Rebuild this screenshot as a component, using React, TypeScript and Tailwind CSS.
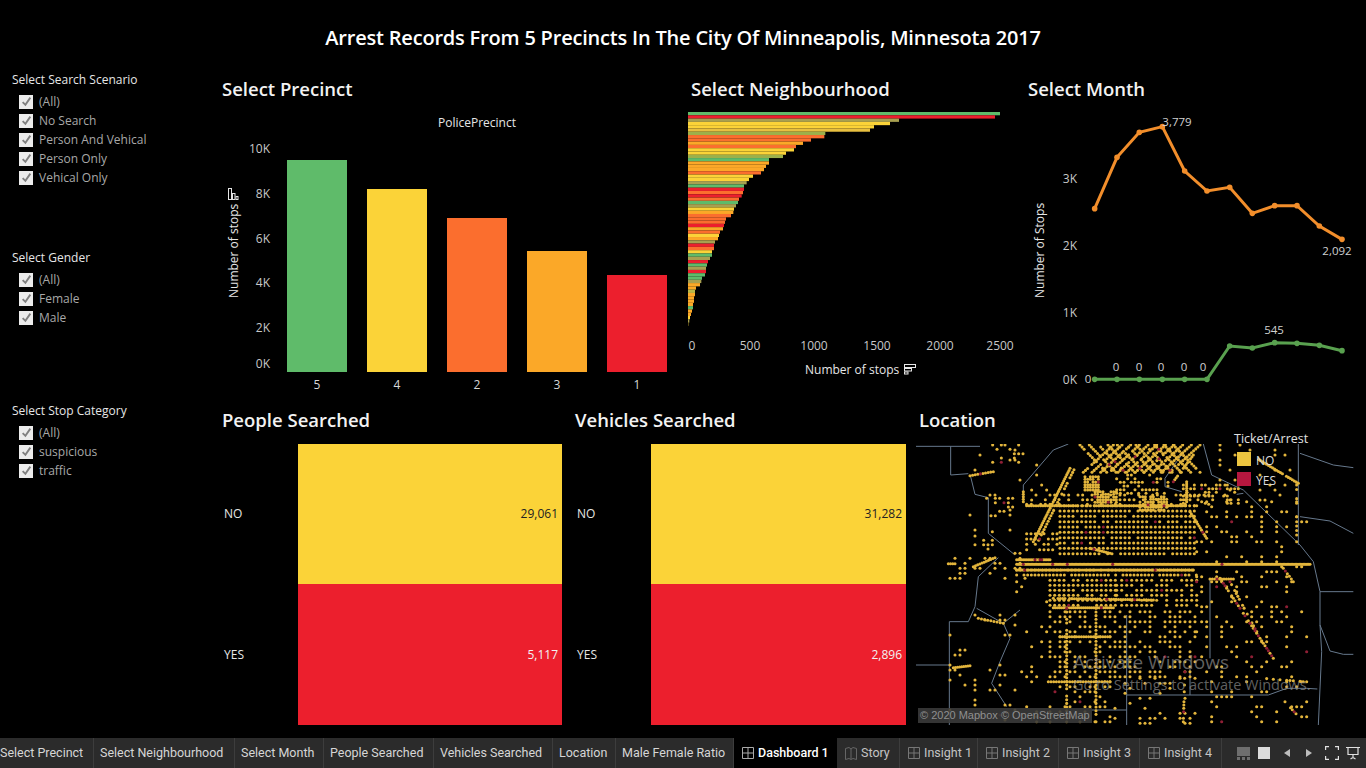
import { FC } from 'react'

const GREEN = '#5fbb6a'
const YELLOW = '#fbd338'
const ORANGE = '#fb6e2e'
const AMBER = '#fba828'
const RED = '#ec1f2d'

const filters = [
  { title: 'Select Search Scenario', items: ['(All)', 'No Search', 'Person And Vehical', 'Person Only', 'Vehical Only'], h: 'h-[178px]' },
  { title: 'Select Gender', items: ['(All)', 'Female', 'Male'], h: 'h-[153px]' },
  { title: 'Select Stop Category', items: ['(All)', 'suspicious', 'traffic'], h: 'h-[150px]' }
]

const precinctBars = [
  { label: '5', x: 287, top: 160, color: GREEN },
  { label: '4', x: 367, top: 189, color: YELLOW },
  { label: '2', x: 447, top: 218, color: ORANGE },
  { label: '3', x: 527, top: 251, color: AMBER },
  { label: '1', x: 607, top: 275, color: RED }
]

const precinctTicks = [
  ['10K', 149],
  ['8K', 194],
  ['6K', 239],
  ['4K', 283],
  ['2K', 328],
  ['0K', 364]
] as const

// right edges of the neighbourhood bars, read off the chart
const hoodBars: [number, string][] = [
  [960, GREEN], [945, RED], [657, '#a8a050'], [630, YELLOW], [582, YELLOW], [570, '#e8c040'], [436, '#9db04a'], [433, ORANGE],
  [393, ORANGE], [369, AMBER], [348, ORANGE], [342, YELLOW], [318, YELLOW], [309, '#9db04a'], [267, GREEN], [267, AMBER],
  [258, AMBER], [252, AMBER], [243, ORANGE], [219, YELLOW], [207, YELLOW], [200, '#a8a050'], [192, GREEN], [192, RED],
  [189, ORANGE], [185, RED], [177, ORANGE], [174, GREEN], [168, '#a8a050'], [162, YELLOW], [160, AMBER], [153, ORANGE],
  [138, ORANGE], [135, ORANGE], [132, RED], [129, AMBER], [120, ORANGE], [117, YELLOW], [114, AMBER], [105, '#a8a050'],
  [102, RED], [102, ORANGE], [96, YELLOW], [96, GREEN], [90, '#a8a050'], [84, RED], [81, GREEN], [78, '#a8a050'], [78, RED],
  [75, GREEN], [66, GREEN], [64, '#a8a050'], [60, AMBER], [48, AMBER], [45, '#b8b848'], [45, AMBER], [42, AMBER], [42, AMBER],
  [39, AMBER], [39, GREEN], [36, AMBER], [33, AMBER], [30, YELLOW], [28, '#a8a050'], [25, YELLOW]
]

const hoodTicks = [
  ['0', 692],
  ['500', 750],
  ['1000', 814],
  ['1500', 877],
  ['2000', 940],
  ['2500', 1000]
] as const

const monthX = [224, 291, 358, 427, 494, 561, 629, 697, 764, 831, 898, 966]
const orangeY = [326, 172, 97, 80, 213, 273, 262, 340, 317, 317, 378, 418]
const greenY = [838, 838, 838, 838, 838, 838, 738, 744, 728, 730, 736, 752]
const toPoints = (ys: number[]) => monthX.map((x, i) => ({ x: 1020 + x / 3, y: 100 + ys[i] / 3 }))

const monthLabels = [
  ['3,779', 1177, 126],
  ['2,092', 1337, 255],
  ['545', 1274, 334],
  ['0', 1088, 383],
  ['0', 1116, 371],
  ['0', 1139, 371],
  ['0', 1161, 371],
  ['0', 1184, 371],
  ['0', 1203, 371]
] as const

const monthTicks = [
  ['3K', 183],
  ['2K', 250],
  ['1K', 317],
  ['0K', 384]
] as const

const boundaries = [
  'M18 34H210M122 34V120L175 116M182 125L195 178L235 188V295L315 360',
  'M265 368L205 425L195 515L175 560H118V690H18M118 690V870M200 520L280 565L330 525M280 565L300 610L270 680L245 745L290 815',
  'M340 150L430 45L475 27M340 150V200',
  'M830 40L800 80L765 130V155L815 170M880 27L905 120L1000 165L1170 330L1210 380L1230 470V570L1235 650L1225 870',
  'M1165 27V330M1170 55L1270 90L1330 98M1170 245L1260 258L1330 295M1230 470H1330M1230 570L1260 648L1300 658H1330M1000 175L980 178',
  'M650 540V870M900 430V670M650 780H1075L1130 760H1190L1222 762M840 700V780M545 825H650'
]

// map points are generated from zones, with a fixed seed so that every render is the same
const buildDots = () => {
  let seed = 20170
  const rnd = () => {
    seed = (seed + 0x6d2b79f5) | 0
    let t = Math.imul(seed ^ (seed >>> 15), 1 | seed)
    t = (t + Math.imul(t ^ (t >>> 7), 61 | t)) ^ t
    return ((t ^ (t >>> 14)) >>> 0) / 4294967296
  }
  const dots: { x: number; y: number; red: boolean }[] = []
  const add = (x: number, y: number, redRate = 0.02) => {
    if (y < 30 || y > 866 || x < 112 || x > 1205) return
    dots.push({ x, y, red: rnd() < redRate })
  }
  const zone = (x0: number, x1: number, y0: number, y1: number, p: number, gx = 16, gy = 16) => {
    for (let y = y0; y <= y1; y += gy) for (let x = x0; x <= x1; x += gx) if (rnd() < p) add(x, y)
  }
  const line = (x0: number, y0: number, x1: number, y1: number, step: number, p = 1, redRate = 0.02) => {
    const n = Math.max(1, Math.round(Math.hypot(x1 - x0, y1 - y0) / step))
    for (let i = 0; i <= n; i++) if (rnd() < p) add(x0 + ((x1 - x0) * i) / n, y0 + ((y1 - y0) * i) / n, redRate)
  }
  // city core
  zone(450, 860, 212, 356, 0.92, 13, 16)
  zone(350, 450, 296, 356, 0.8, 13, 16)
  zone(320, 860, 405, 422, 0.92, 11, 15)
  zone(420, 620, 436, 524, 0.9, 14, 15)
  zone(620, 860, 436, 524, 0.68, 15, 15)
  zone(420, 860, 530, 730, 0.5, 15, 15)
  zone(420, 600, 740, 860, 0.36, 15, 15)
  zone(350, 900, 180, 212, 0.5, 14, 14)
  // main streets
  line(320, 388, 1200, 388, 4)
  line(320, 374, 420, 374, 5)
  line(320, 405, 850, 405, 6)
  line(350, 212, 860, 212, 7, 0.9)
  line(430, 490, 730, 495, 7, 0.9)
  line(430, 518, 610, 518, 6)
  line(450, 605, 600, 605, 7)
  line(415, 740, 600, 740, 8)
  line(470, 520, 470, 860, 11, 0.9)
  line(558, 520, 558, 860, 11, 0.9)
  line(480, 100, 370, 320, 7)
  line(492, 104, 382, 324, 9, 0.8)
  line(900, 432, 970, 432, 7)
  line(540, 340, 600, 355, 6)
  // north diagonal grid
  for (let i = 0; i < 11; i++) {
    line(510 + i * 28, 30, 590 + i * 28, 112, 9, 0.9)
    line(520 + i * 26, 112, 610 + i * 26, 30, 9, 0.9)
  }
  zone(525, 565, 125, 170, 0.95, 8, 8)
  zone(555, 625, 170, 205, 0.85, 8, 8)
  zone(690, 770, 185, 230, 0.8, 8, 8)
  zone(620, 780, 120, 185, 0.35, 11, 11)
  zone(820, 990, 150, 215, 0.5, 11, 11)
  line(790, 140, 850, 60, 7, 0.8)
  line(830, 140, 830, 200, 7)
  line(840, 230, 890, 310, 7)
  // south east diagonals
  line(930, 430, 1090, 670, 9, 0.75, 0.22)
  line(960, 440, 1040, 590, 10, 0.7, 0.15)
  line(1125, 800, 1180, 860, 8, 0.8, 0.2)
  line(1120, 400, 1150, 440, 10, 0.8, 0.3)
  line(1060, 730, 1180, 740, 10, 0.6)
  line(825, 700, 820, 860, 10, 0.5, 0.3)
  // north east
  line(1040, 70, 1165, 145, 7, 0.9)
  line(1160, 150, 1160, 300, 14, 0.7)
  zone(930, 1140, 30, 200, 0.16, 15, 15)
  // outer scatter
  zone(860, 1200, 200, 870, 0.2, 15, 15)
  zone(600, 860, 730, 870, 0.24, 15, 15)
  zone(120, 350, 340, 430, 0.34, 15, 15)
  zone(120, 340, 30, 300, 0.07, 15, 15)
  zone(235, 340, 30, 90, 0.28, 13, 13)
  zone(230, 310, 190, 250, 0.4, 13, 13)
  zone(195, 260, 290, 350, 0.35, 13, 13)
  zone(120, 320, 540, 860, 0.16, 15, 15)
  zone(320, 420, 440, 860, 0.09, 15, 15)
  zone(350, 450, 60, 200, 0.1, 15, 15)
  line(180, 122, 250, 110, 8)
  line(130, 698, 180, 692, 6)
  line(115, 386, 135, 386, 6)
  line(190, 395, 255, 368, 7)
  line(205, 550, 280, 565, 9, 0.8)
  line(340, 170, 340, 200, 8)
  return dots
}

const mapDots = buildDots()

const tabs = [
  { label: 'Select Precinct', w: 'w-[94px]' },
  { label: 'Select Neighbourhood', w: 'w-[141px]' },
  { label: 'Select Month', w: 'w-[89px]' },
  { label: 'People Searched', w: 'w-[110px]' },
  { label: 'Vehicles Searched', w: 'w-[119px]' },
  { label: 'Location', w: 'w-[63px]' },
  { label: 'Male Female Ratio', w: 'w-[118px]' }
]

const sheetTabs = [
  { label: 'Insight 1', w: 'w-[78px]' },
  { label: 'Insight 2', w: 'w-[81px]' },
  { label: 'Insight 3', w: 'w-[81px]' },
  { label: 'Insight 4', w: 'w-[82px]' }
]

const GridIcon: FC<{ color?: string }> = ({ color = '#777' }) => (
  <svg width="12" height="12" viewBox="0 0 12 12" fill="none" stroke={color} className="shrink-0">
    <path d="M.5.5h11v11H.5zM6 .5v11M.5 6h11" />
  </svg>
)

const Heading: FC<{ children: string; className?: string }> = ({ children, className = '' }) => (
  <h2 className={`text-[18.5px] font-semibold leading-none text-[#f2f2f2] ${className}`}>{children}</h2>
)

const FilterList: FC<{ title: string; items: string[]; h: string }> = ({ title, items, h }) => (
  <section className={`${h} pl-3`}>
    <h3 className="flex h-[19px] items-center text-[12px] font-medium text-[#e6e6e6]">{title}</h3>
    <ul className="mt-[3px] pl-[7px]">
      {items.map(item => (
        <li key={item} className="flex h-[19px] items-center gap-[6px] text-[12px] text-[#a8a8a8]">
          <span className="flex size-[14px] items-center justify-center bg-[#ececec]">
            <svg width="11" height="11" viewBox="0 0 10 10" fill="none" stroke="#808080" strokeWidth="1.7">
              <path d="M1.5 5.5 4 8l4.5-6.5" />
            </svg>
          </span>
          {item}
        </li>
      ))}
    </ul>
  </section>
)

const PrecinctChart = () => (
  <svg width="458" height="302" viewBox="222 102 458 302" className="block">
    <text x="477" y="127" textAnchor="middle" fontSize="12" fill="#e6e6e6">PolicePrecinct</text>
    {precinctTicks.map(([label, y]) => (
      <text key={label} x="270" y={y + 4} textAnchor="end" fontSize="12" fill="#c8c8c8">{label}</text>
    ))}
    {precinctBars.map(bar => (
      <g key={bar.label}>
        <rect x={bar.x} y={bar.top} width="60" height={372 - bar.top} fill={bar.color} />
        <text x={bar.x + 30} y="389" textAnchor="middle" fontSize="12" fill="#d8d8d8">{bar.label}</text>
      </g>
    ))}
    <text transform="translate(238 298) rotate(-90)" fontSize="12" fill="#e6e6e6">Number of stops</text>
    <g fill="none" stroke="#e6e6e6" strokeWidth="1">
      <rect x="228.5" y="188.5" width="3" height="11" />
      <rect x="232.5" y="193.5" width="2.5" height="6" />
      <rect x="236" y="196.5" width="2" height="3" />
    </g>
  </svg>
)

const NeighbourhoodChart = () => (
  <svg width="340" height="302" viewBox="680 102 340 302" className="block">
    {hoodBars.map(([edge, color], i) => (
      <rect key={i} x="688" y={112 + i * 3.29} width={(edge - 24) / 3} height="3.29" fill={color} />
    ))}
    {hoodTicks.map(([label, x]) => (
      <text key={label} x={x} y="350" textAnchor="middle" fontSize="12" fill="#c8c8c8">{label}</text>
    ))}
    <text x="805" y="374" fontSize="12" fill="#e6e6e6">Number of stops</text>
    <g fill="none" stroke="#e6e6e6" strokeWidth="1">
      <rect x="904.5" y="364.5" width="11" height="3" />
      <rect x="904.5" y="368.5" width="7" height="2.5" />
      <rect x="904.5" y="372" width="3.5" height="2" />
    </g>
  </svg>
)

const MonthChart = () => (
  <svg width="346" height="302" viewBox="1020 102 346 302" className="block">
    {monthTicks.map(([label, y]) => (
      <text key={label} x="1077" y={y} textAnchor="end" fontSize="12" fill="#c8c8c8">{label}</text>
    ))}
    <text transform="translate(1044 298) rotate(-90)" fontSize="12" fill="#e6e6e6">Number of Stops</text>
    {[
      { color: '#f28e2b', ys: orangeY },
      { color: '#59a14f', ys: greenY }
    ].map(({ color, ys }) => {
      const points = toPoints(ys)
      return (
        <g key={color}>
          <polyline points={points.map(p => `${p.x},${p.y}`).join(' ')} fill="none" stroke={color} strokeWidth="3" />
          {points.map((p, i) => (
            <circle key={i} cx={p.x} cy={p.y} r="2.8" fill={color} />
          ))}
        </g>
      )
    })}
    {monthLabels.map(([label, x, y], i) => (
      <text key={i} x={x} y={y} textAnchor="middle" fontSize="11.5" fill="#d0d0d0">{label}</text>
    ))}
  </svg>
)

const MatrixPanel: FC<{ title: string; no: string; yes: string; panelW: string; rectW: string }> = ({ title, no, yes, panelW, rectW }) => (
  <div className={`flex ${panelW} flex-col`}>
    <Heading className="flex h-[40px] items-center pb-[7px]">{title}</Heading>
    <div className="flex h-[281px]">
      <div className="flex w-[76px] flex-col pl-[2px] text-[12px] text-[#e6e6e6]">
        <div className="flex h-[140px] items-center">NO</div>
        <div className="flex h-[141px] items-center">YES</div>
      </div>
      <div className={`flex ${rectW} flex-col text-right text-[12px]`}>
        <div className="flex h-[140px] items-center justify-end bg-[#fbd338] pr-1 text-[#222]">{no}</div>
        <div className="flex h-[141px] items-center justify-end bg-[#ec1f2d] pr-1 text-[#f2f2f2]">{yes}</div>
      </div>
    </div>
  </div>
)

const LocationPanel = () => (
  <div className="relative flex w-[450px] flex-col">
    <Heading className="flex h-[40px] items-center pb-[7px] pl-[3px]">Location</Heading>
    <div className="relative h-[281px] overflow-hidden">
      <svg width="450" height="281" viewBox="18 27 1350 843" className="block">
        {boundaries.map((d, i) => (
          <path key={i} d={d} fill="none" stroke="#66788c" strokeWidth="3" />
        ))}
        {mapDots.filter(dot => !dot.red).map((dot, i) => (
          <circle key={i} cx={dot.x} cy={dot.y} r="4.6" fill="#e3b53c" />
        ))}
        {mapDots.filter(dot => dot.red).map((dot, i) => (
          <circle key={i} cx={dot.x} cy={dot.y} r="4.6" fill="#8f1f35" />
        ))}
      </svg>
      <div className="absolute bottom-[2px] left-[2px] flex h-[15px] w-[174px] items-center whitespace-nowrap bg-[#3a3a3a]/90 pl-[2px] font-['Liberation_Sans',sans-serif] text-[11px] leading-none text-[#8f8f8f]">
        © 2020 Mapbox © OpenStreetMap
      </div>
      <div className="absolute left-[157px] top-[206px] text-[19px] leading-6 text-[#8c8c8c]/70">Activate Windows</div>
      <div className="absolute left-[157px] top-[232px] whitespace-nowrap text-[14.5px] leading-[18px] text-[#8c8c8c]/70">Go to Settings to activate Windows.</div>
    </div>
    <div className="absolute left-[318px] top-[27px] text-[12.5px] leading-4 text-[#e0e0e0]">Ticket/Arrest</div>
    <div className="absolute left-[321px] top-[48px] flex flex-col gap-[6px] text-[12px] text-[#dcdcdc]">
      <div className="flex h-[14px] items-center gap-[5px]">
        <span className="size-[14px] bg-[#ecc540]" />
        <span className="pt-[3px]">NO</span>
      </div>
      <div className="flex h-[14px] items-center gap-[5px]">
        <span className="size-[14px] bg-[#b5173f]" />
        <span className="pt-[3px]">YES</span>
      </div>
    </div>
  </div>
)

const TabBar = () => (
  <nav className="flex h-[30px] items-center bg-[#2b2b2b] font-['Roboto',sans-serif] text-[12.5px] text-[#d6d6d6]">
    {tabs.map((tab, i) => (
      <div key={tab.label} className={`flex h-full ${tab.w} items-center border-r border-[#3d3d3d] ${i === 0 ? '' : 'pl-[6px]'}`}>
        {tab.label}
      </div>
    ))}
    <div className="flex h-full w-[103px] items-center gap-1 bg-black pl-2 font-medium text-white">
      <GridIcon color="#aaa" />
      Dashboard 1
    </div>
    <div className="flex h-full w-[63px] items-center gap-1 border-r border-[#3d3d3d] pl-2 text-[#c4c4c4]">
      <svg width="12" height="13" viewBox="0 0 12 13" fill="none" stroke="#666" className="shrink-0">
        <path d="M.5 1.5 4 .5 6 2 8 .5l3.5 1v11L8 11.500 6 12.500 4 11.500.5 12.500zM6 2v10" />
      </svg>
      Story
    </div>
    {sheetTabs.map(tab => (
      <div key={tab.label} className={`flex h-full ${tab.w} items-center gap-1 border-r border-[#3d3d3d] pl-2 text-[#c4c4c4]`}>
        <GridIcon />
        {tab.label}
      </div>
    ))}
    <div className="ml-[15px] flex items-center">
      <svg width="13" height="13" viewBox="0 0 13 13" fill="#6e6e6e">
        <path d="M0 0h13v9H0zM0 10h3v3H0zM5 10h3v3H5zM10 10h3v3h-3z" />
      </svg>
      <span className="ml-2 size-[12px] bg-[#dcdcdc]" />
      <svg width="6" height="8" viewBox="0 0 6 8" fill="#bdbdbd" className="ml-[14px]">
        <path d="M6 0v8L0 4z" />
      </svg>
      <svg width="6" height="8" viewBox="0 0 6 8" fill="#bdbdbd" className="ml-4">
        <path d="M0 0v8l6-4z" />
      </svg>
      <svg width="14" height="14" viewBox="0 0 14 14" fill="none" stroke="#e0e0e0" strokeWidth="1.2" className="ml-[13px]">
        <path d="M.6 4V.6H4M10 .6h3.400V4M13.400 10v3.400H10M4 13.400H.6V10" />
      </svg>
      <svg width="14" height="14" viewBox="0 0 14 14" fill="none" stroke="#e0e0e0" strokeWidth="1.2" className="ml-[7px]">
        <path d="M0 1.500h14M2 1.500v7h10v-7M7 8.500v3M4.500 13 7 11.500 9.500 13" />
      </svg>
    </div>
  </nav>
)

export default function App() {
  return (
    <div className="flex h-[768px] w-[1366px] flex-col overflow-hidden bg-black font-['Open_Sans',sans-serif]">
      <header className="flex h-[70px] items-center justify-center pt-[6px] text-[20px] font-semibold tracking-[-0.2px] text-white">
        Arrest Records From 5 Precincts In The City Of Minneapolis, Minnesota 2017
      </header>
      <main className="flex h-[668px]">
        <aside className="w-[222px]">
          {filters.map(filter => (
            <FilterList key={filter.title} {...filter} />
          ))}
        </aside>
        <div className="flex flex-col pt-[6px]">
          <div className="flex h-[328px]">
            <div className="w-[458px]">
              <Heading className="flex h-[26px] items-center">Select Precinct</Heading>
              <PrecinctChart />
            </div>
            <div className="w-[340px]">
              <Heading className="flex h-[26px] items-center pl-[11px]">Select Neighbourhood</Heading>
              <NeighbourhoodChart />
            </div>
            <div className="w-[346px]">
              <Heading className="flex h-[26px] items-center pl-2">Select Month</Heading>
              <MonthChart />
            </div>
          </div>
          <div className="flex h-[334px]">
            <MatrixPanel title="People Searched" no="29,061" yes="5,117" panelW="w-[353px]" rectW="w-[264px]" />
            <MatrixPanel title="Vehicles Searched" no="31,282" yes="2,896" panelW="w-[341px]" rectW="w-[255px]" />
            <LocationPanel />
          </div>
        </div>
      </main>
      <TabBar />
    </div>
  )
}
